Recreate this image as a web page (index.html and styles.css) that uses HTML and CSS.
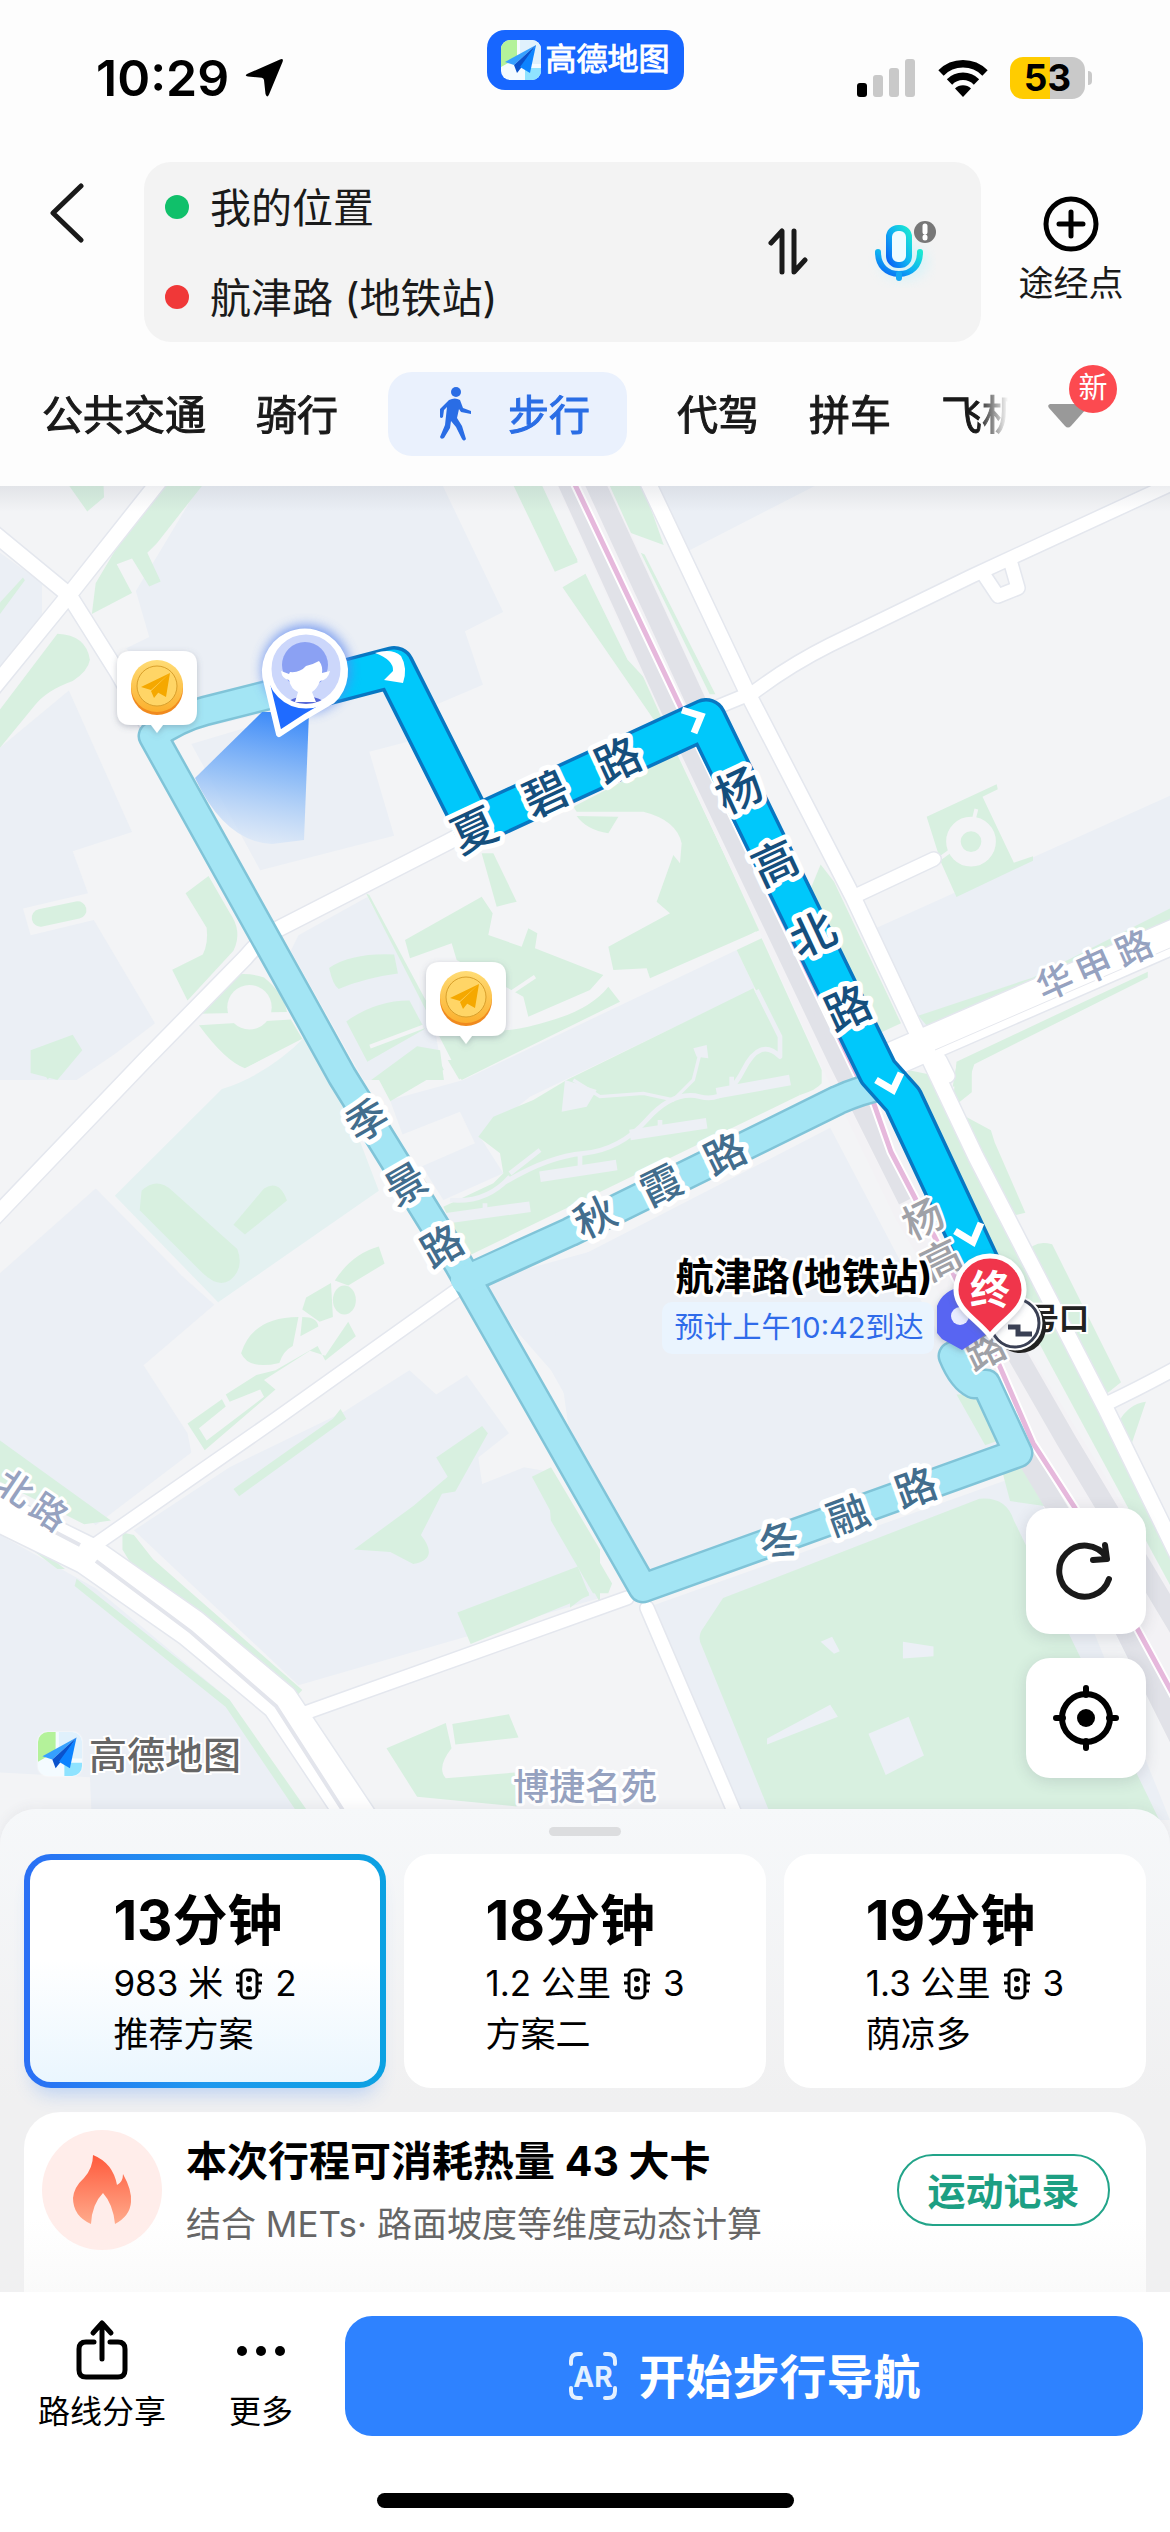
FILE: index.html
```html
<!DOCTYPE html>
<html lang="zh-CN">
<head>
    <meta charset="UTF-8">
    <meta name="viewport" content="width=device-width, initial-scale=1.0">
    <title>高德地图 - 步行路线</title>
    <link rel="stylesheet" href="styles.css">
</head>
<body>
    <!-- 公用图标 -->
    <svg class="defs" width="0" height="0" aria-hidden="true">
        <symbol id="logo" viewBox="0 0 40 40">
            <rect width="40" height="40" rx="9" fill="#f4fbff"/>
            <path d="M9 0h7v18L0 27V9a9 9 0 0 1 9-9z" fill="#b4f29a"/>
            <path d="M24 28h16v3a9 9 0 0 1-9 9h-7z" fill="#8fe3ff"/>
            <path d="M19 0h12a9 9 0 0 1 9 9v15H19z" fill="#e0f1fc"/>
            <path d="M35 5 4 22l9 3z" fill="#35a0ff"/>
            <path d="M35 5 13 25l3 8 4-5z" fill="#0a52cc"/>
            <path d="M35 5 19 27l10 6z" fill="#0c83ff"/>
        </symbol>
        <symbol id="light" viewBox="0 0 28 32">
            <rect x="6" y="2" width="16" height="28" rx="5" fill="none" stroke="#000" stroke-width="3"/>
            <path d="M1 7h4M1 15h4M2 23h3M27 7h-4M27 15h-4M26 23h-3" stroke="#000" stroke-width="3"/>
            <circle cx="14" cy="11" r="3"/>
            <circle cx="14" cy="21" r="3"/>
        </symbol>
        <symbol id="coin" viewBox="0 0 96 100" overflow="visible">
            <path d="M22 8h52q14 0 14 14v46q0 14-14 14H54l-6 8-6-8H22Q8 82 8 68V22Q8 8 22 8z" fill="#fff" filter="url(#soft)"/>
            <circle cx="48" cy="46" r="26" fill="#f08a1e"/>
            <circle cx="48" cy="43" r="26" fill="url(#gold)"/>
            <circle cx="48" cy="43" r="20" fill="#ffd566" stroke="#d9a02c" stroke-width="1"/>
            <path d="M61 30 32 44l10 3zM61 30 42 48l3 7 4-5zM61 30 48 49l9 5z" fill="#f5a800"/>
        </symbol>
    </svg>

    <header class="header">
        <div class="status">
            <div class="status-left">
                <span class="clock">10:29</span>
                <svg width="40" height="40" viewBox="0 0 40 40"><path d="M36 1.500Q40 0 38.500 4L25 36.500q-2 4-3.500-.5L20 22q-.3-2-2.300-2.300L4 18.500q-4.500-1 0-3z"/></svg>
            </div>
            <div class="brand">
                <svg width="40" height="40"><use href="#logo"/></svg>
                <span>高德地图</span>
            </div>
            <div class="status-right">
                <svg width="60" height="38" viewBox="0 0 60 38">
                    <rect x="1" y="24" width="10" height="14" rx="3"/>
                    <g fill="#c9c9c9">
                        <rect x="17" y="16" width="10" height="22" rx="3"/>
                        <rect x="33" y="9" width="10" height="29" rx="3"/>
                        <rect x="49" y="0" width="10" height="38" rx="3"/>
                    </g>
                </svg>
                <svg width="52" height="38" viewBox="0 0 52 38">
                    <path d="M4 14a31 31 0 0 1 44 0M12.500 23a19 19 0 0 1 27 0" fill="none" stroke="#000" stroke-width="7.500"/>
                    <path d="M18 29.500a11.500 11.500 0 0 1 16 0L26 38z"/>
                </svg>
                <div class="battery"><span>53</span></div>
            </div>
        </div>

        <div class="search">
            <button class="back" aria-label="返回">
                <svg width="36" height="60" viewBox="0 0 36 60"><path d="M32 3 4 30l28 27" fill="none" stroke="#1a1a1a" stroke-width="5" stroke-linecap="round" stroke-linejoin="round"/></svg>
            </button>
            <div class="search-box">
                <div class="fields">
                    <label class="field"><i class="dot dot-start"></i><input type="text" value="我的位置" aria-label="起点"></label>
                    <label class="field"><i class="dot dot-end"></i><input type="text" value="航津路 (地铁站)" aria-label="终点"></label>
                </div>
                <button class="swap" aria-label="交换起终点">
                    <svg width="40" height="48" viewBox="0 0 40 48"><path d="M3 15 14 3v41M26 3v41l11-12" fill="none" stroke="#1a1a1a" stroke-width="5" stroke-linecap="round" stroke-linejoin="round"/></svg>
                </button>
                <button class="mic" aria-label="语音输入">
                    <svg width="72" height="72" viewBox="0 0 72 72">
                        <defs>
                            <linearGradient id="micFill" x1="0" y1="1" x2="1" y2="0">
                                <stop offset="0" stop-color="#0a62f5"/><stop offset=".5" stop-color="#0fb2f2"/><stop offset="1" stop-color="#1ce8d2"/>
                            </linearGradient>
                        </defs>
                        <ellipse cx="40" cy="46" rx="24" ry="18" fill="#c9f3fb" opacity=".6" filter="url(#blur)"/>
                        <rect x="25" y="12" width="20" height="37" rx="9" fill="#eefcff" stroke="url(#micFill)" stroke-width="6"/>
                        <path d="M14 36c0 14 9 22 21 22s21-8 21-22" fill="none" stroke="url(#micFill)" stroke-width="6" stroke-linecap="round"/>
                        <path d="M35 58v4" stroke="#16a8f5" stroke-width="6" stroke-linecap="round"/>
                        <circle cx="61" cy="16" r="11" fill="#777"/>
                        <path d="M61 10v6M61 21v1" stroke="#fff" stroke-width="5" stroke-linecap="round"/>
                    </svg>
                </button>
            </div>
            <button class="via">
                <svg width="58" height="58" viewBox="0 0 58 58"><circle cx="29" cy="29" r="25" fill="none" stroke="#000" stroke-width="5"/><path d="M29 17v24M17 29h24" stroke="#000" stroke-width="5" stroke-linecap="round"/></svg>
                <span>途经点</span>
            </button>
        </div>

        <div class="tabs">
            <nav class="tab-list">
                <a href="#bus">公共交通</a>
                <a href="#ride">骑行</a>
                <a href="#walk" class="active">
                    <svg width="36" height="54" viewBox="0 0 36 54">
                        <circle cx="18" cy="5" r="5" fill="#2a6de5"/>
                        <path d="M11 13q6-3 11 0l3 8 8 3v3l-10-2-2-3-2 9 5 8 4 13q-2 3-4 0l-6-12-5-6-1 7-6 10q-3 2-4-1l5-12 2-18-3 3-1 7q-2 2-3 0l0-8z" fill="#2a6de5"/>
                    </svg>
                    <span>步行</span>
                </a>
                <a href="#driver">代驾</a>
                <a href="#carpool">拼车</a>
                <a href="#flight">飞机</a>
            </nav>
            <button class="more-tabs" aria-label="更多出行方式">
                <svg width="42" height="26" viewBox="0 0 42 26"><path d="M3 1h36q3 1 1 4L24 23q-3 3-6 0L2 5Q0 2 3 1z" fill="#999"/></svg>
                <span class="badge">新</span>
            </button>
        </div>
    </header>

    <section class="map">
        <svg class="map-canvas" viewBox="0 486 1170 1360" aria-label="地图">
            <defs>
                <filter id="soft" x="-30%" y="-30%" width="160%" height="160%"><feDropShadow dx="0" dy="2" stdDeviation="3" flood-color="#5a6478" flood-opacity=".35"/></filter>
                <filter id="blur" x="-40%" y="-40%" width="180%" height="180%"><feGaussianBlur stdDeviation="6"/></filter>
                <linearGradient id="gold" x1="0" y1="0" x2="0" y2="1"><stop offset="0" stop-color="#ffdc75"/><stop offset="1" stop-color="#fbb02e"/></linearGradient>
                <linearGradient id="beam" x1=".6" y1="0" x2=".45" y2="1"><stop offset="0" stop-color="#3f8cf8"/><stop offset=".5" stop-color="#8fbdf7" stop-opacity=".9"/><stop offset="1" stop-color="#dde9f8" stop-opacity=".7"/></linearGradient>
                <linearGradient id="shade" x1="0" y1="0" x2="0" y2="1"><stop offset="0" stop-color="#8a90a0" stop-opacity=".16"/><stop offset="1" stop-color="#8a90a0" stop-opacity="0"/></linearGradient>
                <clipPath id="face"><circle cx="306" cy="669" r="35"/></clipPath>
            </defs>
            <rect y="486" width="1170" height="1360" fill="#f3f4f6"/>

            <!-- 地块和绿地 -->
            <g transform="translate(0 480) scale(.38265)">
                <g class="block">
                    <path d="M530 0H1150L1315 345 1215 395 1262 535 1110 600 1050 560H900L520 650 500 560 400 540 330 440 390 410 355 290 410 200z"/>
                    <path d="M500 690 1000 540 1080 680 965 710 1030 930 680 1020z"/>
                    <path d="M0 190 110 270V350L0 500zM180 550 345 920 190 970 230 1080 60 1120 80 1190 245 1150 405 1420 300 1500 200 1568H0V700z"/>
                    <path d="M780 1190 960 1090 1130 1400 1160 1568H950L760 1230z"/>
                </g>
                <g class="green">
                    <path d="M170 0H270L272 45 228 82zM410 0H540L410 165 385 190 420 265 390 278 345 205 305 220 345 295 240 350 250 270z"/>
                    <path d="M150 402Q225 405 235 470 230 500 190 525 120 550 90 590L0 700V600z"/>
                    <path d="M0 320 60 255 65 262 0 350z"/>
                    <path d="M485 1080 545 1035 600 1130Q635 1180 610 1230L490 1360 450 1280 530 1240Q545 1210 540 1170z"/>
                    <path d="M1335 0H1410L1510 215 1450 240zM1470 280 1530 245 1640 470 1770 610 1725 650z"/>
                    <path d="M860 1275Q920 1235 1030 1240L1040 1290Q960 1300 885 1330 870 1320 860 1275zM905 1415Q980 1360 1070 1360L1110 1435 960 1520zM80 1490 190 1450 215 1490 150 1568 80 1550zM970 1568 1090 1480 1150 1490 1160 1568z"/>
                    <path d="M525 1340Q600 1270 690 1300 740 1340 750 1390L520 1395zM520 1425 760 1410 790 1460 640 1537Q590 1520 520 1425z"/>
                    <rect x="82" y="1112" width="145" height="46" rx="23" transform="rotate(-12 150 1135)"/>
                </g>
                <circle cx="652" cy="1378" r="58" class="ground"/>
            </g>
            <g transform="translate(570 480) scale(.38265)">
                <g class="block">
                    <path d="M210 0H670L300 190zM780 1180 1568 825V1150L920 1440z"/>
                </g>
                <g class="green">
                    <path d="M80 0H185L245 170 150 135zM0 170 20 210 0 220zM185 190 195 195 380 560H365z"/>
                    <path d="M932 880 1115 795 1118 808 1078 828 1160 1000 1210 983V995L1010 1090 970 1000z"/>
                    <path d="M655 1005 690 1050 865 1420 800 1450 620 1090z"/>
                    <path d="M910 1400 1210 1300 1568 1120V1150L940 1435zM1010 1520 1510 1285V1300L1050 1530V1600L1000 1640z"/>
                </g>
                <circle cx="1048" cy="945" r="46" fill="none" stroke="#f3f4f6" stroke-width="38"/>
                <path d="M1062 860 1052 900M965 990 1000 965" stroke="#f3f4f6" stroke-width="10"/>
            </g>
            <g transform="translate(360 760) scale(.33333)">
                <path class="block" d="M310 960 1130 570 1185 685 510 1010 360 1130 430 1240 250 1320 130 1130 90 1020z"/>
                <path class="ground" d="M110 1130 300 1055 345 1150 160 1230z"/>
                <g class="green">
                    <path d="M640 140 950 -20 1200 510 870 655 860 625 760 630 745 560 930 460 890 425 940 285 960 310 965 250Q950 180 850 155L650 155zM650 168 775 170 745 220Q680 210 650 168z"/>
                    <path d="M365 280H400L470 425 410 440z"/>
                    <path d="M135 540 365 410 398 460 385 525 485 560 505 505 532 520 525 565 730 645 690 690 505 770 490 710 290 600 275 550 150 595z"/>
                    <path d="M18 400 28 405 245 810Q420 830 560 785 690 750 745 680L780 725 305 960z"/>
                    <path d="M1130 570 1205 535 1385 930V970Q1370 990 1320 1005L1255 880Q1255 830 1185 685z"/>
                    <path d="M620 960 1180 685Q1260 830 1320 1005L320 1490 250 1340 400 1270 430 1240 420 1180 355 1130 400 1070 520 1020z"/>
                </g>
                <g fill="none" stroke="#edf0f5" stroke-width="14">
                    <path d="M430 1270Q560 1190 670 1180T860 1080 1020 1010 1150 930 1260 890V830L1190 690M540 1170 450 1240M660 1180V1240M900 1080V1120M1115 950V1000M270 1320Q380 1330 450 1250M375 1330V1370" stroke-linejoin="round"/>
                    <path d="M540 1250 770 1215M810 1125 1040 1090M1070 1000 1290 960M260 1375 510 1340" stroke-width="32"/>
                    <path d="M640 960 720 1010 850 1000 940 1020 1000 960 1020 880" stroke-width="10"/>
                </g>
                <path d="M615 960 710 990 680 1040 605 1055zM1000 865 1040 855 1045 895 1010 890z" fill="#edf0f5"/>
                <path d="M450 700 525 650M30 860 190 800M1190 520 1120 560" stroke="#f3f4f6" stroke-width="12"/>
            </g>
            <g transform="translate(0 1060) scale(.38265 .4847)">
                <path fill="#e4f1f1" d="M300 280 580 60Q700 30 800 -50L850 -20 990 270 570 500z"/>
                <g class="block">
                    <path d="M0 440 250 265 475 445 560 505 375 630 490 770 500 810 250 960 0 790z"/>
                    <path d="M370 960 600 840 900 725 1070 640 1140 690 1220 650 1330 770 1250 820 1260 875 1370 840 1440 850 1568 1110 780 1290 350 970z"/>
                    <path d="M0 980 250 1090 600 1320 800 1568H240L235 1480 0 1470zM1240 460 1568 390V820L1440 640z"/>
                </g>
                <g class="green">
                    <path d="M90 0H160L125 40zM620 0H680L650 12z"/>
                    <path d="M370 270Q410 240 450 270L620 390Q640 430 600 455 570 470 530 440L365 310zM610 340 690 265Q730 245 750 290L640 360z"/>
                    <path d="M630 605Q660 530 780 530L765 590Q740 600 730 625 650 640 630 605zM790 530Q830 530 832 550L785 570zM790 515 800 490 865 460 870 530 835 540zM875 455Q920 400 990 385L1005 420 910 465z"/>
                    <path d="M490 750 580 700 590 715 520 760 540 785 690 695 680 680 600 705 590 690 670 650 720 640 830 590 850 620 930 570 910 540 850 610 810 600 690 660 720 680 535 805z"/>
                    <path d="M0 785 290 950 220 958 0 870zM320 975 350 980 400 1030 790 1300 760 1325 400 1115 320 1010z"/>
                    <path d="M610 885 870 740 890 720 905 740 625 900zM925 1010 1080 920 1170 860 1140 820 1260 755 1275 770 1190 890 1155 895 1100 980Q1150 1030 1080 1040L1020 1015z"/>
                    <path d="M1195 1140 1510 1045 1540 1105 1230 1205zM1390 860 1440 840 1568 1010V1120zM1010 1420 1165 1368 1180 1420Q1140 1460 1165 1482L1345 1470 1350 1540 1090 1520zM1182 1370 1330 1350 1355 1398 1190 1412z"/>
                    <path d="M0 945 170 1050 150 1050 0 960zM200 1070 600 1320 820 1568H790L590 1335 195 1085zM850 1395 970 1568H955z"/>
                    <path d="M990 40 1140 -10 1160 20 1020 85zM1170 0H1300L1200 40z"/>
                    <circle cx="900" cy="495" r="30"/>
                </g>
            </g>
            <g transform="translate(570 1060) scale(.38265 .4847)">
                <g class="block">
                    <path d="M-60 440 680 140 960 560 1130 790 205 1060 0 780z"/>
                    <path d="M200 1130 1200 850 1568 1568H460z"/>
                </g>
                <g class="green">
                    <path d="M350 1170 400 1110 1070 905Q1140 900 1160 950L1540 1568H530L345 1210Q330 1190 350 1170z"/>
                    <path d="M880 20 940 30 1390 720 1600 1050V1130L1250 620 1090 380z"/>
                    <path d="M1010 10 1060 0 1040 50 1000 55zM1030 115 1100 145 1110 170 1190 315 1165 320 1060 170zM1195 400Q1210 370 1260 380L1440 665 1400 690 1300 560z"/>
                    <path d="M1435 745Q1460 710 1505 705L1460 810zM1010 690 1060 690 1120 785 1085 795zM1130 850 1180 840 1240 920 1150 910zM0 1050 50 1100 0 1130zM-60 850 110 1080 100 1100 60 1100-50 950z"/>
                </g>
                <g fill="#ecf0f6">
                    <path d="M655 1200 685 1190 705 1220 690 1225zM870 1200 950 1210V1230L870 1235z"/>
                    <path d="M515 1400 680 1330 700 1355 515 1412zM780 1390 885 1355 925 1435 825 1475z"/>
                </g>
            </g>

            <!-- 铁路 -->
            <g fill="none">
                <path d="M570 456 688 718 845 1060 916 1206 1000 1350 1110 1530 1200 1690" stroke="#f3f2f5" stroke-width="48"/>
                <path d="M562 470 674 716 838 1060 908 1200M1022 1450 1100 1580 1180 1740M1012 1346 1066 1440 1180 1630" stroke="#e1e2e8" stroke-width="20"/>
                <path d="M589 470 698 706" stroke="#e1e2e8" stroke-width="20"/>
                <path d="M694 745 850 1070" stroke="#e1e2e8" stroke-width="16"/>
                <path d="M568 470 681 708 858 1077 874 1104 891 1152 914 1196 997 1360 1033 1443 1075 1508 1138 1630 1175 1698" stroke="#fff" stroke-width="9"/>
                <path d="M568 470 681 708 858 1077 874 1104 891 1152 914 1196 997 1360 1033 1443 1075 1508 1138 1630 1175 1698" stroke="#e6b8dc" stroke-width="5"/>
            </g>

            <!-- 道路：先描边再填白 -->
            <g class="road-case">
                <path d="M168 470 69 595-10 692M-10 530 69 595 118 673 155 738M-10 1222 145 1060 245 958Q260 940 276 930L448 842 480 825" stroke-width="18"/>
                <path d="M642 470 746 690 853 897 918 1035 976 1157 1106 1409 1180 1560" stroke-width="18"/>
                <path d="M715 708 754 692Q790 665 830 645L972 576 1180 480M982 572 998 596 1018 588 1010 560M853 897 934 859M92 1547 276 1419 460 1288M302 1714 627 1598M647 1608 742 1830M1106 1404Q1140 1388 1180 1366M940 1060 948 1076" stroke-width="16"/>
                <path d="M895 1058 1180 934" stroke-width="36"/>
                <path d="M-10 1508 88 1556 191 1628 280 1702 372 1840" stroke-width="40"/>
            </g>
            <g class="road">
                <path d="M168 470 69 595-10 692M-10 530 69 595 118 673 155 738M-10 1222 145 1060 245 958Q260 940 276 930L448 842 480 825" stroke-width="15"/>
                <path d="M642 470 746 690 853 897 918 1035 976 1157 1106 1409 1180 1560" stroke-width="15"/>
                <path d="M715 708 754 692Q790 665 830 645L972 576 1180 480M982 572 998 596 1018 588 1010 560M853 897 934 859M92 1547 276 1419 460 1288M302 1714 627 1598M647 1608 742 1830M1106 1404Q1140 1388 1180 1366M940 1060 948 1076" stroke-width="13"/>
                <path d="M895 1058 1180 934" stroke-width="33"/>
                <path d="M-10 1508 88 1556 191 1628 280 1702 372 1840" stroke-width="37"/>
            </g>
            <path d="M96 1561 191 1632 276 1706 362 1840M55 1532 80 1545" fill="none" stroke="#e3e5ec" stroke-width="4"/>
            <path d="M935 1050 1170 948" stroke="#e6e8ee" stroke-width="1"/>

            <!-- 备选路线 -->
            <g class="alt-case">
                <path d="M300 687 205 711Q178 718 153 736L300 1000 342 1076 459 1265 643 1588 1018 1453 986 1384H974Q962 1378 953 1356"/>
                <path d="M474 1276 570 1232 838 1100Q860 1090 885 1085"/>
            </g>
            <g class="alt">
                <path d="M300 687 205 711Q178 718 153 736L300 1000 342 1076 459 1265 643 1588 1018 1453 986 1384H974Q962 1378 953 1356"/>
                <path d="M464 1280 570 1232 838 1100Q860 1090 885 1085"/>
            </g>

            <!-- 推荐路线 -->
            <path class="main-case" d="M306 690 394 667 474 826 706 719 878 1072 903 1100 992 1290"/>
            <path class="main" d="M306 690 394 667 474 826 706 719 878 1072 903 1100 992 1290"/>
            <g class="arrow">
                <path d="M375 653Q392 648 401 656 408 668 403 683L384 680 393 671Q394 660 375 653z" class="arrow-turn"/>
                <path d="M682 710 701 716 694 733"/>
                <path d="M876 1080 893 1090 901 1073"/>
                <path d="M955 1231 973 1242 981 1223"/>
            </g>

            <!-- 路名 -->
            <g class="name name-main">
                <text transform="translate(474 830) rotate(-25)">夏</text>
                <text transform="translate(546 794) rotate(-25)">碧</text>
                <text transform="translate(618 760) rotate(-25)">路</text>
                <text transform="translate(739 790) rotate(-25)">杨</text>
                <text transform="translate(775 863) rotate(-25)">高</text>
                <text transform="translate(813 934) rotate(-25)">北</text>
                <text transform="translate(848 1008) rotate(-25)">路</text>
            </g>
            <g class="name name-alt">
                <text transform="translate(367 1120) rotate(-30)">季</text>
                <text transform="translate(406 1184) rotate(-30)">景</text>
                <text transform="translate(442 1246) rotate(-30)">路</text>
                <text transform="translate(595 1217) rotate(-26)">秋</text>
                <text transform="translate(661 1185) rotate(-26)">霞</text>
                <text transform="translate(725 1154) rotate(-26)">路</text>
                <text transform="translate(779 1541) rotate(-20)">冬</text>
                <text transform="translate(848 1515) rotate(-20)">融</text>
                <text transform="translate(916 1488) rotate(-20)">路</text>
            </g>
            <g class="name name-road">
                <text transform="translate(1055 982) rotate(-24)">华</text>
                <text transform="translate(1094 966) rotate(-24)">申</text>
                <text transform="translate(1134 948) rotate(-24)">路</text>
                <text transform="translate(15 1488) rotate(34)">北</text>
                <text transform="translate(49 1512) rotate(34)">路</text>
                <text x="585" y="1787">博捷名苑</text>
            </g>
            <g class="name name-rail">
                <text transform="translate(923 1219) rotate(-26)">杨</text>
                <text transform="translate(941 1260) rotate(-26)">高</text>
                <text transform="translate(985 1350) rotate(-26)">路</text>
            </g>

            <!-- 金币 -->
            <use href="#coin" x="109" y="643" width="96" height="100"/>
            <use href="#coin" x="418" y="954" width="96" height="100"/>

            <!-- 我的位置 -->
            <path d="M262 712 195 778Q225 842 272 844L304 840 309 712z" fill="url(#beam)"/>
            <circle cx="306" cy="669" r="44" fill="#5b87ef" opacity=".8" filter="url(#blur)"/>
            <path d="M279 734 267 684A40 40 0 1 1 332 701Q305 716 279 734z" fill="#1f6bff" stroke="#fff" stroke-width="6" stroke-linejoin="round"/>
            <circle cx="306" cy="669" r="37" fill="#ccd7fb" stroke="#fff" stroke-width="5"/>
            <g clip-path="url(#face)">
                <path d="M284 708Q286 698 306 696 326 698 328 708z" fill="#5668d8"/>
                <circle cx="305" cy="665" r="23" fill="#8ba1f3"/>
                <path d="M290 672Q300 673 306 666 314 664 319 661 323 666 322 673L330 671Q328 680 320 681 317 689 312 692L316 702H295L298 692Q291 689 289 680 282 679 281 671L289 674z" fill="#fff"/>
            </g>

            <!-- 终点 -->
            <text class="exit" x="1059" y="1318">号口</text>
            <circle cx="1020" cy="1327" r="26" fill="#222"/>
            <circle cx="1015" cy="1323" r="26" fill="#fff" stroke="#fff" stroke-width="3"/>
            <circle cx="1015" cy="1323" r="24" fill="#fff" stroke="#3a4054" stroke-width="3"/>
            <path d="M1008 1327H1018V1334H1032" fill="none" stroke="#3a4054" stroke-width="5"/>
            <path d="M962 1287a27 27 0 0 1 20 50L962 1350 942 1339 937 1333V1306q6-16 25-19z" fill="#5865f2" filter="url(#soft)"/>
            <circle cx="960" cy="1316" r="9" fill="#e8ecff"/>
            <path d="M990 1256a34 34 0 0 1 34 34c0 20-22 30-34 46-12-16-34-26-34-46a34 34 0 0 1 34-34z" fill="#f0354c" stroke="#fff" stroke-width="5" filter="url(#soft)"/>
            <text class="end" x="990" y="1289">终</text>
            <text class="station" x="804" y="1276">航津路(地铁站)</text>
            <rect x="662" y="1302" width="272" height="52" rx="10" fill="#eaf4fe"/>
            <text class="eta" x="799" y="1327">预计上午10:42到达</text>

            <use href="#logo" x="38" y="1732" width="44" height="44" class="logo-shadow"/>
            <text class="map-brand" x="165" y="1755">高德地图</text>
            <rect y="486" width="1170" height="26" fill="url(#shade)"/>
        </svg>
        <div class="map-tools">
            <button class="tool refresh" aria-label="刷新">
                <svg width="60" height="60" viewBox="0 0 60 60"><path d="M53 38A25.500 25.500 0 1 1 50 16M37 19l14-1-2-14" fill="none" stroke="#1a1a1a" stroke-width="6" stroke-linecap="round" stroke-linejoin="round"/></svg>
            </button>
            <button class="tool" aria-label="定位">
                <svg width="66" height="66" viewBox="0 0 66 66"><circle cx="33" cy="33" r="24" fill="none" stroke="#000" stroke-width="6"/><circle cx="33" cy="33" r="9"/><path d="M33 3v7M33 56v7M3 33h7M56 33h7" stroke="#000" stroke-width="6" stroke-linecap="round"/></svg>
            </button>
        </div>
    </section>

    <main class="sheet">
        <div class="handle"></div>
        <div class="plans">
            <button class="plan selected">
                <span class="plan-body">
                    <strong>13分钟</strong>
                    <span class="dist">983 米 <svg width="28" height="32"><use href="#light"/></svg>2</span>
                    <span>推荐方案</span>
                </span>
            </button>
            <button class="plan">
                <span class="plan-body">
                    <strong>18分钟</strong>
                    <span class="dist">1.2 公里 <svg width="28" height="32"><use href="#light"/></svg>3</span>
                    <span>方案二</span>
                </span>
            </button>
            <button class="plan">
                <span class="plan-body">
                    <strong>19分钟</strong>
                    <span class="dist">1.3 公里 <svg width="28" height="32"><use href="#light"/></svg>3</span>
                    <span>荫凉多</span>
                </span>
            </button>
        </div>
        <div class="calorie">
            <div class="flame">
                <svg width="60" height="72" viewBox="0 0 60 72">
                    <defs><linearGradient id="fire" x1="0" y1="0" x2="0" y2="1"><stop offset="0" stop-color="#ff5a3c"/><stop offset="1" stop-color="#ffab8c"/></linearGradient></defs>
                    <path d="M21 1Q41 9 45 31 51 28 51 20 60 36 59 48 58 62 43 70 41 50 31 39 20 50 19 70 1 62 1 44 2 33 12 24 21 14 21 1z" fill="url(#fire)"/>
                </svg>
            </div>
            <div class="calorie-text">
                <h2>本次行程可消耗热量 43 大卡</h2>
                <p>结合 METs· 路面坡度等维度动态计算</p>
            </div>
            <button class="record">运动记录</button>
        </div>
    </main>

    <footer class="footer">
        <div class="actions">
            <button class="action share">
                <svg width="60" height="66" viewBox="0 0 60 66"><path d="M22 26h-8q-7 0-7 7v21q0 7 7 7h32q7 0 7-7V33q0-7-7-7h-8M30 43V8M21 17l9-10 9 10" fill="none" stroke="#000" stroke-width="5" stroke-linecap="round" stroke-linejoin="round"/></svg>
                <span>路线分享</span>
            </button>
            <button class="action">
                <svg width="60" height="66" viewBox="0 0 60 66"><circle cx="11" cy="35" r="5"/><circle cx="30" cy="35" r="5"/><circle cx="49" cy="35" r="5"/></svg>
                <span>更多</span>
            </button>
            <button class="start">
                <span class="ar">
                    <svg width="50" height="50" viewBox="0 0 50 50"><path d="M3 13V10q0-7 7-7h3M37 3h3q7 0 7 7v3M47 37v3q0 7-7 7h-3M13 47h-3q-7 0-7-7v-3" fill="none" stroke="#e3f0ff" stroke-width="4" stroke-linecap="round"/><text x="25" y="26">AR</text></svg>
                </span>
                <span class="start-label">开始步行导航</span>
            </button>
        </div>
        <div class="home-bar"></div>
    </footer>
</body>
</html>
```
FILE: styles.css
```css
* { box-sizing: border-box; margin: 0; padding: 0; }
body { font-family: Inter, "Noto Sans CJK SC", sans-serif; background: #fff; color: #1a1a1a; }
button { font: inherit; color: inherit; background: none; border: none; cursor: pointer; }
a { color: inherit; text-decoration: none; }
svg { display: block; flex-shrink: 0; }
.defs { position: absolute; }

/* 状态栏 */
.header { background: #fdfdfd; }
.status { display: grid; grid-template-columns: 1fr auto 1fr; padding: 30px 0 54px; }
.status-left, .status-right { display: flex; align-items: center; height: 60px; margin-top: 18px; }
.status-left { gap: 15px; padding-left: 96px; }
.status-right { justify-content: flex-end; gap: 21px; padding-right: 85px; color: #000; }
.clock { font-size: 50px; font-weight: 600; color: #000; }
.brand { display: flex; align-items: center; gap: 5px; height: 60px; padding: 0 14px; border-radius: 18px; background: #1766ff; color: #fff; font-size: 31px; line-height: 1; -webkit-text-stroke: 1px; }
.brand span { padding-bottom: 4px; }
.battery { position: relative; width: 75px; height: 42px; border-radius: 13px; background: linear-gradient(90deg, #ffcc00 53%, #c9c9c9 53%); font-size: 37px; font-weight: 700; line-height: 42px; text-align: center; }
.battery::after { content: ""; position: absolute; right: -7px; top: 14px; width: 4px; height: 14px; border-radius: 0 4px 4px 0; background: #c9c9c9; }

/* 起终点 */
.search { display: flex; padding: 0 9px 0 24px; }
.back { width: 120px; height: 102px; padding-left: 25px; }
.search-box { display: flex; flex: 1; align-items: center; min-width: 0; padding-right: 45px; border-radius: 27px; background: #f3f3f3; }
.fields { flex: 1; min-width: 0; }
.field { display: flex; align-items: center; gap: 21px; height: 90px; padding-left: 21px; }
.field input { flex: 1; min-width: 0; padding-bottom: 5px; border: none; outline: none; background: none; font: inherit; font-size: 41px; color: #1a1a1a; }
.dot { width: 24px; height: 24px; border-radius: 50%; }
.dot-start { background: #10c06a; }
.dot-end { background: #f03838; }
.swap { display: flex; justify-content: center; width: 60px; }
.mic { margin-left: 46px; }
.via { display: flex; flex-direction: column; align-items: center; justify-content: center; gap: 8px; width: 180px; padding-bottom: 5px; font-size: 35px; line-height: 44px; }

/* 出行方式 */
.tabs { display: flex; align-items: center; padding: 30px 0; }
.tab-list { display: flex; flex: 1; align-items: center; gap: 50px; min-width: 0; height: 84px; padding-left: 42px; overflow: hidden; font-size: 41px; white-space: nowrap; -webkit-text-stroke: 1px; mask-image: linear-gradient(90deg, #000 97%, transparent); }
.tab-list a { flex-shrink: 0; padding-bottom: 5px; }
.tab-list .active { display: flex; align-items: center; gap: 34px; height: 84px; padding: 0 37px 0 50px; border-radius: 24px; background: #eaf1fd; color: #2a6de5; }
.active svg { stroke-width: 0; }
.active span { padding-bottom: 5px; }
.more-tabs { position: relative; width: 162px; padding: 3px 0 0 39px; }
.badge { position: absolute; left: 61px; top: -35px; width: 48px; height: 48px; border-radius: 50%; background: #fc4a50; color: #fff; font-size: 29px; line-height: 46px; text-align: center; }

/* 地图 */
.map { position: relative; }
.map-canvas { width: 100%; height: auto; }
.ground { fill: #f3f4f6; }
.block { fill: #ebeff5; }
.green { fill: #d8f0e0; }
.road-case, .road { fill: none; stroke-linecap: round; stroke-linejoin: round; }
.road-case { stroke: #e4e7ee; }
.road { stroke: #fff; }
.alt-case, .alt, .main-case, .main { fill: none; stroke-linecap: round; stroke-linejoin: round; }
.alt-case { stroke: #80c4d8; stroke-width: 31px; }
.alt { stroke: #a3e5f4; stroke-width: 26px; }
.main-case { stroke: #0877c2; stroke-width: 42px; }
.main { stroke: #00c8fb; stroke-width: 35px; }
.arrow { fill: none; stroke: #fff; stroke-width: 7px; }
.arrow-turn { fill: #fff; stroke: none; }
.map text { text-anchor: middle; dominant-baseline: central; }
.name { font-weight: 500; stroke: #fff; stroke-width: 10px; stroke-linejoin: round; paint-order: stroke; }
.name-main { font-size: 45px; fill: #154f7d; }
.name-alt { font-size: 41px; fill: #426d8d; }
.name-road { font-size: 36px; fill: #96a2c0; stroke-width: 6px; }
.name-rail { font-size: 40px; fill: #9fa1a7; stroke-width: 5px; }
.station { font-size: 38px; font-weight: 700; fill: #000; stroke: #fff; stroke-width: 6px; stroke-linejoin: round; paint-order: stroke; }
.eta { font-size: 29px; fill: #2f6bea; }
.exit { font-size: 30px; font-weight: 700; fill: #222; stroke: #fff; stroke-width: 4px; paint-order: stroke; }
.end { font-size: 40px; font-weight: 700; fill: #fff; }
.map-brand { font-size: 38px; font-weight: 500; fill: #666; stroke: #fff; stroke-width: 4px; paint-order: stroke; }
.logo-shadow { filter: drop-shadow(0 0 1px #fff); }
.map-tools { position: absolute; right: 24px; bottom: 68px; display: flex; flex-direction: column; gap: 24px; }
.tool { display: flex; align-items: center; justify-content: center; width: 120px; height: 120px; border-radius: 24px; background: #fff; box-shadow: 0 3px 15px rgba(60, 70, 90, 0.16); }
.refresh { height: 126px; }

/* 方案面板 */
.sheet { position: relative; margin-top: -37px; padding: 18px 24px 0; border-radius: 36px 36px 0 0; background: linear-gradient(#f6f8fa, #f0f0f1 60%); box-shadow: 0 -3px 12px rgba(60, 70, 90, 0.06); }
.handle { width: 72px; height: 9px; margin: 0 auto 18px; border-radius: 5px; background: #dcdddf; }
.plans { display: grid; grid-template-columns: repeat(3, 1fr); gap: 18px; }
.plan { display: flex; justify-content: center; height: 234px; padding-top: 22px; border: 6px solid transparent; border-radius: 27px; background: #fff; color: #000; text-align: left; }
.plan.selected { background: linear-gradient(#fff 45%, #eaf6fe) padding-box, linear-gradient(90deg, #2a6ff5, #1f98ee 50%, #0ba1e2) border-box; box-shadow: 0 15px 18px -9px rgba(70, 140, 245, 0.3); }
.plan-body { display: flex; flex-direction: column; font-size: 35px; line-height: 51px; }
.plan strong { font-size: 55px; line-height: 76px; }
.dist { display: flex; align-items: center; gap: 12px; }
.calorie { display: flex; align-items: flex-start; gap: 24px; height: 180px; margin-top: 24px; padding: 18px 36px 0 18px; border-radius: 36px 36px 0 0; background: linear-gradient(#fff 60%, #fafafa); }
.flame { display: flex; align-items: center; justify-content: center; width: 120px; height: 120px; border-radius: 50%; background: #ffedea; }
.calorie-text { flex: 1; line-height: 63px; }
.calorie h2 { font-size: 41px; font-weight: 700; color: #000; }
.calorie p { font-size: 35px; color: #666; }
.record { width: 213px; height: 72px; margin-top: 24px; padding-bottom: 3px; border: 2px solid #22a489; border-radius: 36px; color: #1d9f83; font-size: 38px; font-weight: 700; }

/* 底部操作 */
.footer { position: relative; padding: 24px 27px; background: #fff; }
.actions { display: flex; align-items: flex-start; gap: 34px; }
.action { display: flex; flex-direction: column; align-items: center; gap: 6px; width: 100px; color: #000; font-size: 32px; line-height: 48px; white-space: nowrap; }
.share { width: 150px; }
.start { display: flex; flex: 1; align-items: center; justify-content: center; gap: 21px; height: 120px; border-radius: 27px; background: #2e82ff; color: #fff; font-size: 47px; font-weight: 700; }
.start-label { padding-bottom: 5px; }
.ar text { font-size: 28px; font-weight: 700; fill: #e3f0ff; text-anchor: middle; dominant-baseline: central; }
.home-bar { width: 417px; height: 15px; margin: 57px auto 0; border-radius: 8px; background: #000; }
```
